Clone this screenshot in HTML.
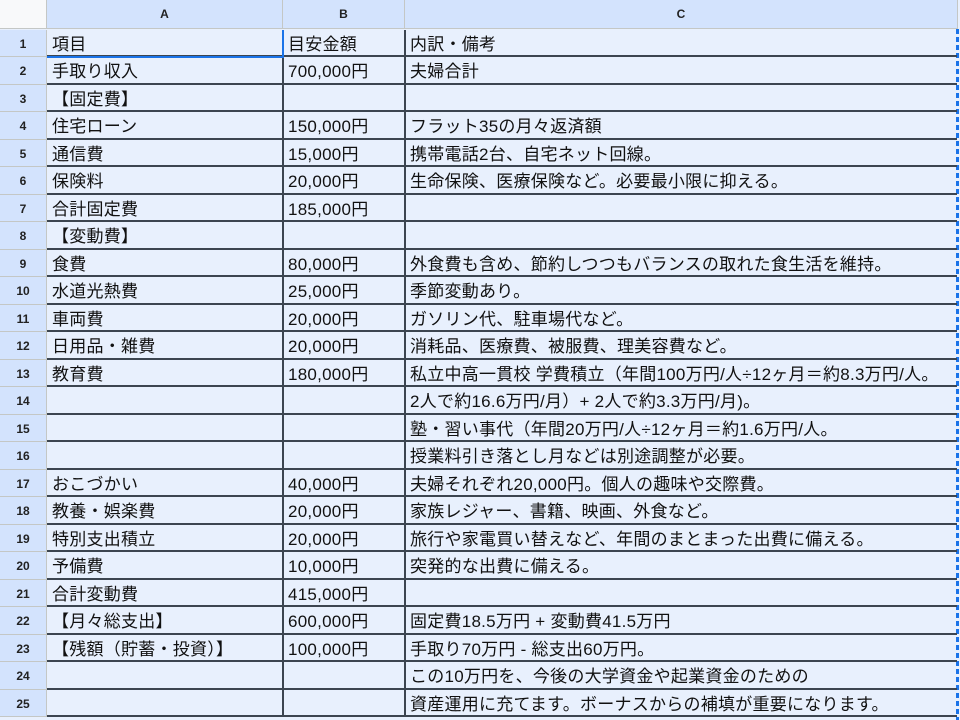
<!DOCTYPE html>
<html><head><meta charset="utf-8"><style>
*{margin:0;padding:0;box-sizing:border-box}
body{width:960px;height:720px;overflow:hidden;background:#e8f0fd;font-family:"Liberation Sans","Noto Sans CJK JP",sans-serif;position:relative}
.h{position:absolute;top:0;height:29px;background:#d3e3fd;border-right:1px solid #c4c7c5;border-bottom:1px solid #c4c7c5;font:bold 12px "Liberation Sans",sans-serif;color:#222;display:flex;align-items:center;justify-content:center}
.r{position:absolute;left:0;width:47px;height:27.5px;background:#d3e3fd;border-bottom:1px solid #c4c7c5;border-right:1px solid #c4c7c5;font:bold 12px "Liberation Sans",sans-serif;color:#222;display:flex;align-items:center;justify-content:center;padding-top:2px}
.c{position:absolute;height:27.5px;font-size:17px;letter-spacing:0.25px;color:#111;padding-left:5px;line-height:29px;white-space:nowrap;overflow:visible;border-bottom:2px solid #3c4550;border-right:2px solid #3c4550}
</style></head><body>
<div class="h" style="left:0;width:47px;background:#f8f9fa"></div>
<div class="h" style="left:47px;width:236px">A</div>
<div class="h" style="left:283px;width:122px">B</div>
<div class="h" style="left:405px;width:553px">C</div>
<div style="position:absolute;left:956px;top:29px;width:3px;height:691px;background:repeating-linear-gradient(#1a73e8 0 5px,transparent 5px 8px)"></div>
<script>
const d=[
["項目","目安金額","内訳・備考"],
["手取り収入","700,000円","夫婦合計"],
["【固定費】","",""],
["住宅ローン","150,000円","フラット35の月々返済額"],
["通信費","15,000円","携帯電話2台、自宅ネット回線。"],
["保険料","20,000円","生命保険、医療保険など。必要最小限に抑える。"],
["合計固定費","185,000円",""],
["【変動費】","",""],
["食費","80,000円","外食費も含め、節約しつつもバランスの取れた食生活を維持。"],
["水道光熱費","25,000円","季節変動あり。"],
["車両費","20,000円","ガソリン代、駐車場代など。"],
["日用品・雑費","20,000円","消耗品、医療費、被服費、理美容費など。"],
["教育費","180,000円","私立中高一貫校 学費積立（年間100万円/人÷12ヶ月＝約8.3万円/人。"],
["","","2人で約16.6万円/月）+ 2人で約3.3万円/月)。"],
["","","塾・習い事代（年間20万円/人÷12ヶ月＝約1.6万円/人。"],
["","","授業料引き落とし月などは別途調整が必要。"],
["おこづかい","40,000円","夫婦それぞれ20,000円。個人の趣味や交際費。"],
["教養・娯楽費","20,000円","家族レジャー、書籍、映画、外食など。"],
["特別支出積立","20,000円","旅行や家電買い替えなど、年間のまとまった出費に備える。"],
["予備費","10,000円","突発的な出費に備える。"],
["合計変動費","415,000円",""],
["【月々総支出】","600,000円","固定費18.5万円 + 変動費41.5万円"],
["【残額（貯蓄・投資）】","100,000円","手取り70万円 - 総支出60万円。"],
["","","この10万円を、今後の大学資金や起業資金のための"],
["","","資産運用に充てます。ボーナスからの補填が重要になります。"]];
let h="";
d.forEach((r,i)=>{const t=29.5+27.5*i;
h+=`<div class="r" style="top:${t}px">${i+1}</div>`;
h+=`<div class="c" style="top:${t}px;left:47px;width:237px">${r[0]}</div>`;
h+=`<div class="c" style="top:${t}px;left:283px;width:123px">${r[1]}</div>`;
h+=`<div class="c" style="top:${t}px;left:405px;width:552px;border-right:none">${r[2]}</div>`;});
document.write(h);
</script>
<div style="position:absolute;left:47px;top:56px;width:237px;height:2px;background:#1a73e8"></div>
<div style="position:absolute;left:282px;top:30px;width:2px;height:28px;background:#1a73e8"></div>
</body></html>
